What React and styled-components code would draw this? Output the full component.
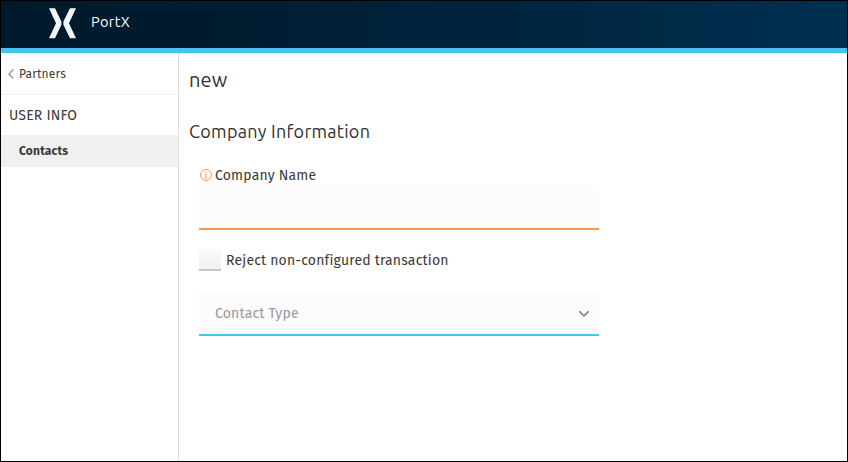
import React from 'react';
import styled, { createGlobalStyle } from 'styled-components';

const GlobalStyle = createGlobalStyle`
  *, *::before, *::after { box-sizing: border-box; }
  body { margin: 0; background: #fff; }
`;

const sans = `'Fira Sans', 'Noto Sans', sans-serif`;
const display = `Ubuntu, 'Noto Sans', sans-serif`;

const Window = styled.div`
  display: flex;
  flex-direction: column;
  width: 848px;
  height: 462px;
  border: 1px solid #000;
  background: #fff;
  color: #3a3a3a;
  font-family: ${sans};
  font-size: 14px;
  overflow: hidden;
`;

const Header = styled.header`
  flex: none;
  display: flex;
  align-items: flex-start;
  height: 52px;
  padding: 7px 0 0 48px;
  border-bottom: 5px solid #42c6e6;
  background: linear-gradient(90deg, #00192c 0%, #001c31 28%, #002f50 100%);
`;

const Logo = styled.svg`
  flex: none;
  width: 27px;
  height: 31px;
  fill: #f3f6f8;
`;

const Brand = styled.span`
  margin-left: 15px;
  color: #fff;
  font-family: ${display};
  font-size: 14.5px;
  line-height: 28px;
  letter-spacing: 0.4px;
`;

const Body = styled.div`
  flex: 1;
  display: flex;
  min-height: 0;
`;

const Sidebar = styled.nav`
  flex: none;
  width: 178px;
  border-right: 1px solid #dcdcdc;
`;

const BackLink = styled.a`
  display: flex;
  align-items: center;
  height: 42px;
  padding: 1px 0 0 7px;
  border-bottom: 1px solid #eee;

  svg { width: 6px; height: 10px; margin-right: 5px; }
`;

const SectionTitle = styled.div`
  height: 40px;
  padding-left: 8px;
  line-height: 42px;
`;

const NavItem = styled.a`
  display: block;
  height: 32px;
  padding-left: 18px;
  background: #f0f0f0;
  font-size: 12px;
  font-weight: 700;
  line-height: 32px;
`;

const Main = styled.main`
  flex: 1;
  padding: 12px 10px;
`;

const Title = styled.h1`
  margin: 0;
  color: #303030;
  font: 400 20px/30px ${display};
  letter-spacing: 0.2px;
`;

const Subtitle = styled.h2`
  margin: 21px 0 0;
  color: #303030;
  font: 400 18px/30px ${display};
  letter-spacing: 0.28px;
`;

const Form = styled.form`
  width: 400px;
  margin: 20px 0 0 10px;
`;

const Label = styled.label`
  display: flex;
  align-items: center;
  height: 19px;
  padding-left: 1px;

  svg { width: 12px; height: 12px; margin: 0 3px 1px 0; }
`;

const Input = styled.input`
  display: block;
  width: 400px;
  height: 45px;
  padding: 0 16px;
  border: 0;
  border-bottom: 2px solid #f2994a;
  border-radius: 0;
  outline: 0;
  background: #fcfcfc;
`;

const CheckRow = styled.label`
  display: flex;
  align-items: center;
  height: 22px;
  margin: 19px 0 20px;
`;

const Checkbox = styled.span`
  width: 22px;
  height: 22px;
  margin-right: 5px;
  border-bottom: 2px solid #c6c6c6;
  background: linear-gradient(#fafafa, #f1f1f1);
`;

const Select = styled.div`
  display: flex;
  align-items: center;
  justify-content: space-between;
  height: 45px;
  padding: 1px 9px 0 16px;
  border-bottom: 2px solid #42c6e6;
  background: #fcfcfc;
  color: #999;

  svg { width: 12px; height: 8px; margin-top: 1px; }
`;

const Text = styled.span`
  font-size: ${p => p.$size || 14}px;
  letter-spacing: ${p => p.$track ?? 0.19}px;
  font-variant-ligatures: common-ligatures;
  white-space: nowrap;
`;

export default function App() {
  return (
    <Window>
      <GlobalStyle />
      <Header>
        <Logo viewBox="0 0 27 31">
          <path d="M0 0.3H6L12.4 13.4V16.8L6 30.2H0L7 15.2Z" />
          <path d="M27 0.3H21L14.4 13.4V16.8L21 30.2H27L20 15.2Z" />
        </Logo>
        <Brand>PortX</Brand>
      </Header>
      <Body>
        <Sidebar>
          <BackLink>
            <svg viewBox="0 0 6 10" fill="none" stroke="#999" strokeWidth="1.4">
              <path d="M5.4 0.6L1 5L5.4 9.4" />
            </svg>
            <Text $size={12} $track={0.2}>Partners</Text>
          </BackLink>
          <SectionTitle><Text>USER INFO</Text></SectionTitle>
          <NavItem><Text $size={12}>Contacts</Text></NavItem>
        </Sidebar>
        <Main>
          <Title>new</Title>
          <Subtitle>Company Information</Subtitle>
          <Form>
            <Label htmlFor="company-name">
              <svg viewBox="0 0 12 12" fill="none" stroke="#f5994f">
                <circle cx="6" cy="6" r="5.5" strokeWidth="1" />
                <path d="M6 5V9M5 5.2H6M4.9 8.9H7.1M6 2.7V3.8" strokeWidth="1" />
              </svg>
              <Text>Company Name</Text>
            </Label>
            <Input id="company-name" />
            <CheckRow>
              <Checkbox role="checkbox" aria-checked="false" />
              <Text>Reject non-configured transaction</Text>
            </CheckRow>
            <Select>
              <Text>Contact Type</Text>
              <svg viewBox="0 0 12 8" fill="none" stroke="#808080" strokeWidth="1.6">
                <path d="M1.3 1.2L6 5.9L10.7 1.2" />
              </svg>
            </Select>
          </Form>
        </Main>
      </Body>
    </Window>
  );
}
